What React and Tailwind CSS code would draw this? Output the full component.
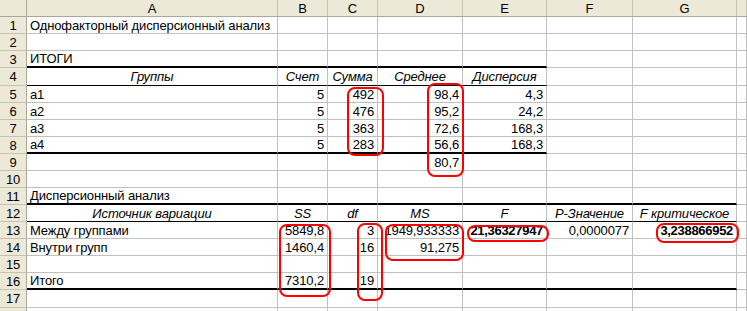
import React from "react";

const widths = ["w-[27px]", "w-[251px]", "w-[50px]", "w-[50px]", "w-[85px]", "w-[84px]", "w-[86px]", "w-[104px]", "flex-1"];
const letters = ["", "A", "B", "C", "D", "E", "F", "G", ""];

// cell: [text, align, style] ; style: i = italic, b = bold
const rows = [
  { n: 1, c: [["Однофакторный дисперсионный анализ", "l"]] },
  { n: 2, c: [] },
  { n: 3, c: [["ИТОГИ", "l"]], border: { thick: 5 } },
  {
    n: 4,
    h: "h-[18px]",
    c: [["Группы", "c", "i"], ["Счет", "c", "i"], ["Сумма", "c", "i"], ["Среднее", "c", "i"], ["Дисперсия", "c", "i"]],
    border: { thin: 5 },
  },
  { n: 5, c: [["a1", "l"], ["5", "r"], ["492", "r"], ["98,4", "r"], ["4,3", "r"]] },
  { n: 6, c: [["a2", "l"], ["5", "r"], ["476", "r"], ["95,2", "r"], ["24,2", "r"]] },
  { n: 7, c: [["a3", "l"], ["5", "r"], ["363", "r"], ["72,6", "r"], ["168,3", "r"]] },
  { n: 8, c: [["a4", "l"], ["5", "r"], ["283", "r"], ["56,6", "r"], ["168,3", "r"]], border: { thick: 5 } },
  { n: 9, c: [null, null, null, ["80,7", "r"]] },
  { n: 10, c: [] },
  { n: 11, c: [["Дисперсионный анализ", "l"]], border: { thick: 7 } },
  {
    n: 12,
    c: [
      ["Источник вариации", "c", "i"],
      ["SS", "c", "i"],
      ["df", "c", "i"],
      ["MS", "c", "i"],
      ["F", "c", "i"],
      ["P-Значение", "c", "i"],
      ["F критическое", "c", "i"],
    ],
    border: { thin: 7 },
  },
  {
    n: 13,
    c: [
      ["Между группами", "l"],
      ["5849,8", "r"],
      ["3", "r"],
      ["1949,933333", "r"],
      ["21,36327947", "r", "b"],
      ["0,0000077", "r"],
      ["3,238866952", "r", "b"],
    ],
  },
  { n: 14, c: [["Внутри групп", "l"], ["1460,4", "r"], ["16", "r"], ["91,275", "r"]] },
  { n: 15, c: [] },
  { n: 16, c: [["Итого", "l"], ["7310,2", "r"], ["19", "r"]], border: { thick: 7 } },
  { n: 17, h: "h-[18px]", c: [] },
  { n: "", c: [] },
];

const marks = [
  "left-[347px] top-[87px] w-[37px] h-[69px]",
  "left-[427px] top-[83px] w-[37px] h-[94px]",
  "left-[279px] top-[224px] w-[52px] h-[73px]",
  "left-[357px] top-[223px] w-[26px] h-[78px]",
  "left-[385px] top-[224px] w-[79px] h-[37px]",
  "left-[467px] top-[225px] w-[82px] h-[17px]",
  "left-[656px] top-[223px] w-[83px] h-[20px]",
];

function Cell({ i, cell, row }) {
  const thick = row.border?.thick && i <= row.border.thick;
  const thin = row.border?.thin && i <= row.border.thin;
  const bottom = thick
    ? "border-b-2 border-b-black"
    : thin
    ? "border-b border-b-black"
    : "border-b border-b-[#c0c0c0]";
  const align = !cell ? "" : cell[1] === "r" ? "justify-end" : cell[1] === "c" ? "justify-center" : "justify-start";
  return (
    <div
      className={`${widths[i]} shrink-0 flex items-center px-[3px] overflow-visible whitespace-nowrap border-r border-r-[#c0c0c0] ${bottom} ${align}`}
    >
      {cell && (
        <span className={`${cell[2] === "i" ? "italic" : ""} ${cell[2] === "b" ? "font-bold tracking-[-0.3px]" : ""}`}>
          {cell[0]}
        </span>
      )}
    </div>
  );
}

export default function App() {
  return (
    <div className="relative w-[747px] h-[311px] overflow-hidden bg-white text-[13px] leading-[15px] tracking-[-0.12px] text-black font-['Liberation_Sans',Arial,sans-serif]">
      {/* column headers */}
      <div className="flex h-[17px] bg-[#ece9d8] border-b border-b-[#aca899]">
        {letters.map((l, i) => (
          <div
            key={i}
            className={`${widths[i]} shrink-0 flex items-center justify-center border-r ${
              i === 0 ? "border-r-[#aca899]" : "border-r-[#c5c2b2]"
            }`}
          >
            {l}
          </div>
        ))}
      </div>

      {rows.map((row, k) => (
        <div key={k} className={`flex ${row.h || "h-[17px]"}`}>
          <div className="w-[27px] shrink-0 flex items-center justify-center bg-[#ece9d8] border-r border-r-[#aca899] border-b border-b-[#c5c2b2]">
            {row.n}
          </div>
          {[1, 2, 3, 4, 5, 6, 7, 8].map((i) => (
            <Cell key={i} i={i} cell={row.c[i - 1]} row={row} />
          ))}
        </div>
      ))}

      {/* red highlight frames */}
      {marks.map((m, i) => (
        <div key={i} className={`absolute ${m} border-2 border-[#ff0000] rounded-[8px] pointer-events-none`} />
      ))}
    </div>
  );
}
